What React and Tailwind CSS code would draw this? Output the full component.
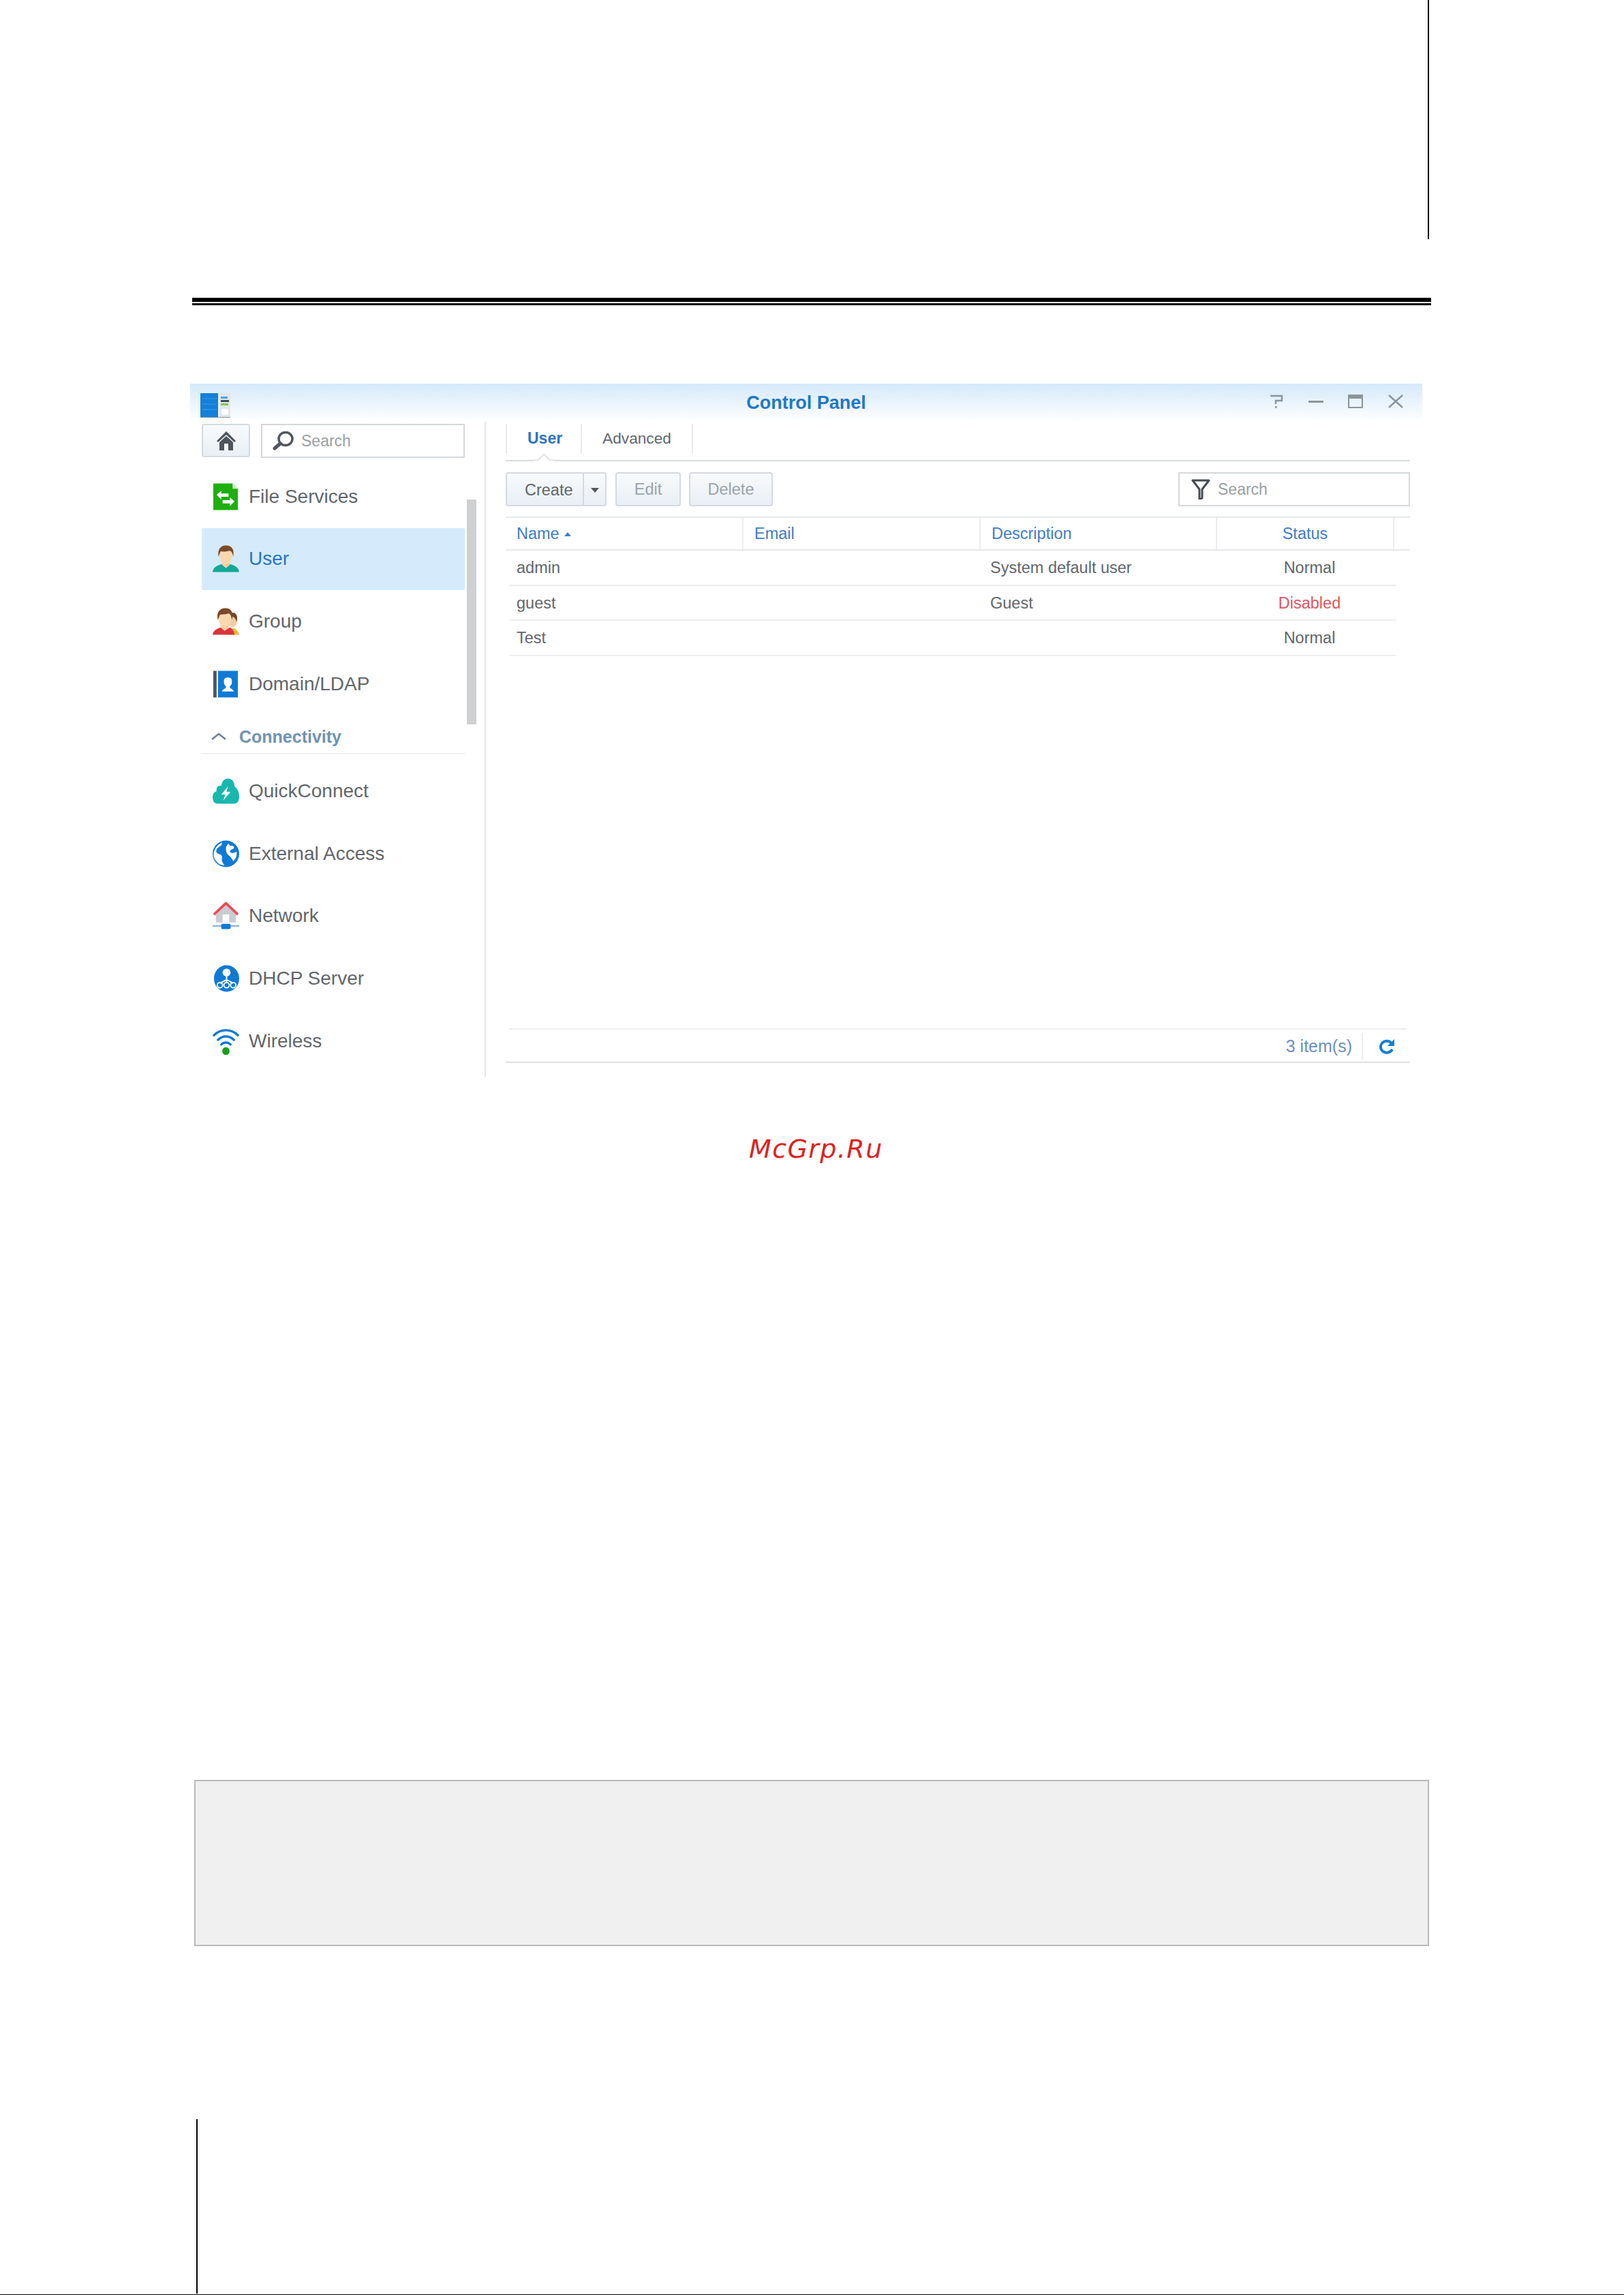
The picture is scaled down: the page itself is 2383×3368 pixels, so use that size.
import React from "react";

// Sidebar icons, drawn on a 40x40 box
const FileIcon = () => (
  <svg viewBox="0 0 40 40" className="w-[39px] h-[40px]">
    <path d="M1 0H30L38 8V40H1Z" fill="#1fae0f" />
    <path d="M30 0L38 8H30Z" fill="#c9efc4" />
    <path d="M6 17L13 11V15H24V20H13V24Z" fill="#fff" />
    <path d="M33 27L26 21V25H15V30H26V34Z" fill="#fff" />
  </svg>
);

const UserIcon = () => (
  <svg viewBox="0 0 40 40" className="w-[39px] h-[40px]">
    <path d="M0 40C1 32 8 30 14 28L20 33L26 28C32 30 39 32 40 40Z" fill="#14a899" />
    <path d="M14 22H26V29L20 34L14 29Z" fill="#f6cfa3" />
    <ellipse cx="20" cy="14" rx="10" ry="14" fill="#f9d8b0" />
    <path d="M9 17C7 6 12 0 20 0C29 0 33 6 31 17C30 11 28 8 25 8C20 10 14 9 12 9C11 11 10 14 9 17Z" fill="#7b4a2a" />
  </svg>
);

const GroupIcon = () => (
  <svg viewBox="0 0 40 40" className="w-[39px] h-[40px]">
    <path d="M22 40C30 40 38 40 40 40C39 35 36 32 32 30L26 32Z" fill="#efb62f" />
    <ellipse cx="30" cy="18" rx="7" ry="11" fill="#f3cda3" />
    <path d="M24 16C24 9 28 6 32 7C37 9 38 14 36 21C35 16 33 14 31 13C28 13 26 13 24 16Z" fill="#6d4527" />
    <path d="M0 40C1 33 7 31 12 29L19 33L26 29C30 31 32 34 33 40Z" fill="#d9343d" />
    <path d="M12 22H25V29L18 34L12 29Z" fill="#f6cfa3" />
    <ellipse cx="18.500" cy="14" rx="10" ry="14" fill="#f9d8b0" />
    <path d="M8 18C5 6 11 0 19 0C28 0 32 6 29 18C28 12 27 9 24 8C19 10 13 9 11 10C10 12 9 15 8 18Z" fill="#7b4a2a" />
  </svg>
);

const DomainIcon = () => (
  <svg viewBox="0 0 40 40" className="w-[39px] h-[40px]">
    <rect x="1" y="0" width="5" height="40" fill="#4a5560" />
    <rect x="8" y="0" width="30" height="40" fill="#0f7ad6" />
    <path d="M14 31C15 27 19 27 20 25V23C17 21 17 18 17 15C17 11 20 10 23 10C26 10 29 11 29 15C29 18 29 21 26 23V25C27 27 31 27 32 31Z" fill="#fff" />
  </svg>
);

const QuickIcon = () => (
  <svg viewBox="0 0 40 40" className="w-[39px] h-[40px]">
    <path d="M8 39C2 39 0 34 0 29C0 24 3 21 6 20C5 14 9 11 13 12C14 5 18 1 23 1C29 1 33 6 33 13C37 15 40 22 40 28C40 35 37 39 32 39Z" fill="#18b7ae" />
    <path d="M23 13L13 25H19L16 34L27 21H21Z" fill="#fff" />
  </svg>
);

const GlobeIcon = () => (
  <svg viewBox="0 0 40 40" className="w-[39px] h-[40px]">
    <ellipse cx="20" cy="20" rx="20" ry="20" fill="#0f7ad6" />
    <path d="M14 3C15 7 10 9 8 11C4 14 5 19 9 20C13 21 15 23 14 27C13 30 15 34 18 37C12 38 5 33 2 25C0 16 6 6 14 3Z" fill="#fff" />
    <path d="M24 4C24 7 27 8 30 8C33 9 33 12 30 13C27 14 25 16 27 18C30 20 33 18 36 17C37 23 35 28 31 31C29 27 27 24 24 22C21 20 20 16 20 12C20 9 22 6 24 4Z" fill="#fff" />
  </svg>
);

const NetworkIcon = () => (
  <svg viewBox="0 0 40 40" className="w-[39px] h-[40px]">
    <path d="M5 18L20 4L35 18V30H5Z" fill="#c9ccd1" />
    <rect x="15" y="18" width="10" height="12" fill="#fff" />
    <path d="M2 18L20 1L38 18" fill="none" stroke="#e84f5c" strokeWidth="4" />
    <rect x="0" y="34" width="40" height="2.500" fill="#8fb5dc" />
    <rect x="13" y="32" width="14" height="8" rx="2" fill="#0f7ad6" />
  </svg>
);

const DhcpIcon = () => (
  <svg viewBox="0 0 40 40" className="w-[39px] h-[40px]">
    <ellipse cx="21" cy="20" rx="19" ry="20" fill="#0f7ad6" />
    <ellipse cx="21" cy="11" rx="6" ry="6" fill="#fff" />
    <path d="M21 15V22M21 22L11 27M21 22V27M21 22L31 27" stroke="#fff" strokeWidth="2" fill="none" />
    <circle cx="11" cy="30" r="4" fill="none" stroke="#fff" strokeWidth="1.800" />
    <circle cx="21" cy="30" r="4" fill="none" stroke="#fff" strokeWidth="1.800" />
    <circle cx="31" cy="30" r="4" fill="none" stroke="#fff" strokeWidth="1.800" />
  </svg>
);

const WirelessIcon = () => (
  <svg viewBox="0 0 40 40" className="w-[39px] h-[40px]">
    <path d="M2 11C12 1 28 1 38 11" fill="none" stroke="#0f7ad6" strokeWidth="3.500" strokeLinecap="round" />
    <path d="M8 18C15 11 25 11 32 18" fill="none" stroke="#0f7ad6" strokeWidth="3.500" strokeLinecap="round" />
    <path d="M13 25C17 21 23 21 27 25" fill="none" stroke="#0f7ad6" strokeWidth="3.500" strokeLinecap="round" />
    <ellipse cx="20" cy="35" rx="5.500" ry="6" fill="#15a01e" />
  </svg>
);

const Logo = () => (
  <svg viewBox="0 0 45 36" className="w-[45px] h-[36px]">
    <rect x="0" y="0" width="26" height="36" rx="1" fill="#1480d8" />
    <path d="M3 8H24M3 16H24M3 24H24" stroke="#3d9be6" strokeWidth="1" />
    <rect x="28" y="0" width="16" height="36" fill="#dfe6ec" />
    <rect x="30" y="5" width="10" height="3" fill="#4aa3df" />
    <rect x="30" y="10" width="12" height="3" fill="#3c4a55" />
    <rect x="30" y="15" width="11" height="3" fill="#8bc24a" />
    <rect x="31" y="23" width="10" height="9" rx="3" fill="#fff" />
    <rect x="0" y="35" width="44" height="1" fill="#8f9aa5" />
  </svg>
);

const HomeIcon = () => (
  <svg viewBox="0 0 30 30" className="w-[30px] h-[30px]">
    <path d="M15 1L29 15L27 17L15 6L3 17L1 15Z" fill="#4f555c" />
    <path d="M5 17L15 8L25 17V29H18V20H12V29H5Z" fill="#4f555c" />
    <rect x="12" y="19" width="6" height="10" fill="#fff" />
  </svg>
);

const SearchIcon = () => (
  <svg viewBox="0 0 31 28" className="w-[31px] h-[28px]">
    <ellipse cx="19" cy="11" rx="10" ry="9.500" fill="none" stroke="#50565c" strokeWidth="3.500" />
    <path d="M11 18L3 25" stroke="#50565c" strokeWidth="5" strokeLinecap="round" />
  </svg>
);

const FunnelIcon = () => (
  <svg viewBox="0 0 28 30" className="w-[28px] h-[30px]">
    <path d="M2 2H26L16 15V28L12 30V15Z" fill="none" stroke="#444b52" strokeWidth="3" strokeLinejoin="round" />
  </svg>
);

const RefreshIcon = () => (
  <svg viewBox="0 0 24 22" className="w-[24px] h-[22px]">
    <path d="M19 6A9 8.500 0 1 0 20 15" fill="none" stroke="#1480cf" strokeWidth="4" />
    <path d="M23 0V10H13Z" fill="#1480cf" />
  </svg>
);

const HelpIcon = () => (
  <svg viewBox="0 0 22 20" className="w-[22px] h-[20px]">
    <path d="M2 2H19V9H10V14" fill="none" stroke="#8d949b" strokeWidth="2.500" />
    <rect x="9" y="17" width="2.500" height="3" fill="#8d949b" />
  </svg>
);

const MinIcon = () => (
  <svg viewBox="0 0 22 20" className="w-[22px] h-[20px]">
    <rect x="0" y="9" width="22" height="3" fill="#8d949b" />
  </svg>
);

const MaxIcon = () => (
  <svg viewBox="0 0 22 20" className="w-[22px] h-[20px]">
    <rect x="1" y="1" width="20" height="18" fill="none" stroke="#8d949b" strokeWidth="2" />
    <rect x="1" y="1" width="20" height="5" fill="#8d949b" />
  </svg>
);

const CloseIcon = () => (
  <svg viewBox="0 0 24 20" className="w-[24px] h-[20px]">
    <path d="M2 1L22 19M22 1L2 19" stroke="#8d949b" strokeWidth="2.500" />
  </svg>
);

const topItems = [
  { label: "File Services", icon: <FileIcon /> },
  { label: "User", icon: <UserIcon />, active: true },
  { label: "Group", icon: <GroupIcon /> },
  { label: "Domain/LDAP", icon: <DomainIcon /> },
];

const connectivityItems = [
  { label: "QuickConnect", icon: <QuickIcon /> },
  { label: "External Access", icon: <GlobeIcon /> },
  { label: "Network", icon: <NetworkIcon /> },
  { label: "DHCP Server", icon: <DhcpIcon /> },
  { label: "Wireless", icon: <WirelessIcon /> },
];

const users = [
  { name: "admin", description: "System default user", status: "Normal" },
  { name: "guest", description: "Guest", status: "Disabled" },
  { name: "Test", description: "", status: "Normal" },
];

const NavItem = ({ item }) => (
  <div
    className={`h-[91.6px] flex items-center gap-[14px] pl-[16px] rounded-[3px] text-[28px] ${
      item.active ? "bg-[#d5ebfb] text-[#2b74c4]" : "text-[#62666b]"
    }`}
  >
    {item.icon}
    <span>{item.label}</span>
  </div>
);

const ToolButton = ({ children, disabled, className = "" }) => (
  <div
    className={`h-[50px] flex items-center justify-center border-2 border-[#d3dae1] rounded-[4px] bg-gradient-to-b from-[#f8fafc] to-[#e9eff5] text-[23.5px] ${
      disabled ? "text-[#9aa3ab]" : "text-[#62666b]"
    } ${className}`}
  >
    {children}
  </div>
);

export default function App() {
  return (
    <div className="w-[2383px] h-[3368px] bg-white flex flex-col overflow-hidden font-['Liberation_Sans',Arial,sans-serif]">
      {/* Page furniture above the screenshot */}
      <div className="h-[351px] w-[2px] ml-[2095px] bg-black" />
      <div className="mt-[86px] ml-[282px] w-[1818px] flex flex-col gap-[2px]">
        <div className="h-[6px] bg-black" />
        <div className="h-[3px] bg-black" />
      </div>

      {/* Control Panel window */}
      <div className="mt-[115px] ml-[279px] w-[1808px] h-[1017px] flex flex-col">
        <div className="h-[56px] shrink-0 grid grid-cols-[1fr_auto_1fr] items-center bg-gradient-to-b from-[#d5e9fa] to-white">
          <div className="pl-[15px] pt-[8px]">
            <Logo />
          </div>
          <div className="text-[27px] font-bold text-[#1f78c8]">Control Panel</div>
          <div className="flex justify-end items-center pr-[27px] gap-[36px] pb-[4px]">
            <HelpIcon />
            <MinIcon />
            <MaxIcon />
            <CloseIcon />
          </div>
        </div>

        <div className="flex-1 flex min-h-0">
          {/* Sidebar */}
          <div className="w-[434px] shrink-0 flex pl-[17px] border-r-2 border-[#e3e5e7] overflow-hidden">
            <div className="w-[386px] shrink-0">
              <div className="flex gap-[16px] pt-[3px] h-[64px]">
                <div className="w-[71px] h-[49px] flex items-center justify-center border-2 border-[#d3dae1] rounded-[4px] bg-gradient-to-b from-[#f8fafc] to-[#e9eff5]">
                  <HomeIcon />
                </div>
                <div className="w-[299px] h-[50px] flex items-center gap-[11px] pl-[15px] border-2 border-[#d5d8da] text-[23px] text-[#9a9fa3]">
                  <SearchIcon />
                  <span>Search</span>
                </div>
              </div>
              {topItems.map((item) => (
                <NavItem key={item.label} item={item} />
              ))}
              <div className="h-[58px] flex items-center gap-[19px] pl-[14px] pt-[8px] border-b-2 border-[#eef0f1]">
                <svg viewBox="0 0 22 10" className="w-[22px] h-[10px]">
                  <path d="M1 9L11 1L21 9" fill="none" stroke="#6b7f90" strokeWidth="2.500" />
                </svg>
                <span className="text-[25px] font-bold text-[#6f93b2]">Connectivity</span>
              </div>
              <div className="mt-[8px]">
                {connectivityItems.map((item) => (
                  <NavItem key={item.label} item={item} />
                ))}
              </div>
            </div>
            <div className="ml-[3px] mt-[114px] w-[14px] h-[330px] bg-[#cfd0d1]" />
          </div>

          {/* Main panel */}
          <div className="flex-1 min-w-0 flex flex-col pl-[29px] pr-[18px] text-[23.5px]">
            <div className="h-[58px] shrink-0 flex pt-[3px] border-b-2 border-[#d9dbdd] relative">
              <div className="w-[112px] h-[43px] flex items-center pl-[30px] border-l-2 border-r-2 border-[#e8eaec] text-[23px] font-bold text-[#2b74c4]">
                User
              </div>
              <div className="w-[163px] h-[43px] flex items-center justify-center border-r-2 border-[#e8eaec] text-[22.7px] text-[#62666b]">
                Advanced
              </div>
              <svg viewBox="0 0 30 12" className="absolute left-[41px] bottom-[-2px] w-[30px] h-[12px]">
                <path d="M0 10H6L15 1L24 10H30V12H0Z" fill="#fff" />
                <path d="M0 10.500H6L15 1.500L24 10.500H30" fill="none" stroke="#d9dbdd" strokeWidth="1.500" />
              </svg>
            </div>

            <div className="mt-[16px] flex items-center shrink-0">
              <ToolButton className="w-[148px] justify-start pt-[2px]">
                <span className="w-[113px] pl-[26px] border-r-2 border-[#d3dae1] leading-[46px] -mt-[2px] pt-[2px]">Create</span>
                <svg viewBox="0 0 12 7" className="w-[12px] h-[7px] ml-[10px]">
                  <path d="M0 0H12L6 7Z" fill="#50565c" />
                </svg>
              </ToolButton>
              <ToolButton disabled className="w-[96px] ml-[13px] pt-[2px]">
                Edit
              </ToolButton>
              <ToolButton disabled className="w-[123px] ml-[12px] pt-[2px]">
                Delete
              </ToolButton>
              <div className="ml-auto w-[340px] h-[50px] flex items-center gap-[11px] pl-[17px] border-2 border-[#d5d8da] text-[23px] text-[#9a9fa3]">
                <FunnelIcon />
                <span>Search</span>
              </div>
            </div>

            {/* User table */}
            <div className="mt-[15px] h-[50px] shrink-0 grid grid-cols-[349px_348px_347px_260px_23px] items-stretch border-t-2 border-b-2 border-[#e6e8ea] text-[#3f7cc6]">
              <div className="flex items-center gap-[7px] pl-[16px] pt-[2px] border-r-2 border-[#eceef0]">
                Name
                <svg viewBox="0 0 10 6" className="w-[10px] h-[6px]">
                  <path d="M0 6L5 0L10 6Z" fill="#3f7cc6" />
                </svg>
              </div>
              <div className="flex items-center pl-[16px] pt-[2px] border-r-2 border-[#eceef0]">Email</div>
              <div className="flex items-center pl-[16px] pt-[2px] border-r-2 border-[#eceef0]">Description</div>
              <div className="flex items-center justify-center pt-[2px] border-r-2 border-[#eceef0]">Status</div>
              <div />
            </div>
            {users.map((u) => (
              <div
                key={u.name}
                className="ml-[5px] w-[1302px] h-[51.500px] shrink-0 grid grid-cols-[344px_348px_347px_263px] items-center pt-[2px] border-b-2 border-[#eceef0] text-[#62666b]"
              >
                <div className="pl-[11px]">{u.name}</div>
                <div />
                <div className="pl-[14px]">{u.description}</div>
                <div className={`text-center pl-[8px] ${u.status === "Disabled" ? "text-[#e0545e]" : ""}`}>{u.status}</div>
              </div>
            ))}
            <div className="flex-1" />

            {/* Footer */}
            <div className="mx-[5px] h-[2px] bg-[#eceef0]" />
            <div className="h-[47px] shrink-0 flex items-center justify-end pr-[22px] pt-[2px]">
              <span className="text-[25px] text-[#6c8fbc] pr-[14px]">3 item(s)</span>
              <div className="h-[40px] w-[2px] bg-[#eceef0] mr-[23px]" />
              <RefreshIcon />
            </div>
            <div className="h-[2px] bg-[#dfe1e3] mb-[20px]" />
          </div>
        </div>
      </div>

      {/* Watermark */}
      <div className="mt-[83px] ml-[1099px] h-[46px] leading-[46px] text-[38px] italic tracking-[1.4px] text-[#dd2222] font-['DejaVu_Sans',sans-serif] whitespace-nowrap">
        McGrp.Ru
      </div>

      {/* Empty note box */}
      <div className="mt-[903px] ml-[285px] w-[1812px] h-[244px] shrink-0 border-2 border-[#b9b9b9] bg-[#f0f0f0]" />

      {/* Bottom rule */}
      <div className="mt-[254px] ml-[288px] w-[2px] h-[256px] shrink-0 bg-black" />
      <div className="mt-[1px] h-[1px] shrink-0 bg-black" />
    </div>
  );
}
